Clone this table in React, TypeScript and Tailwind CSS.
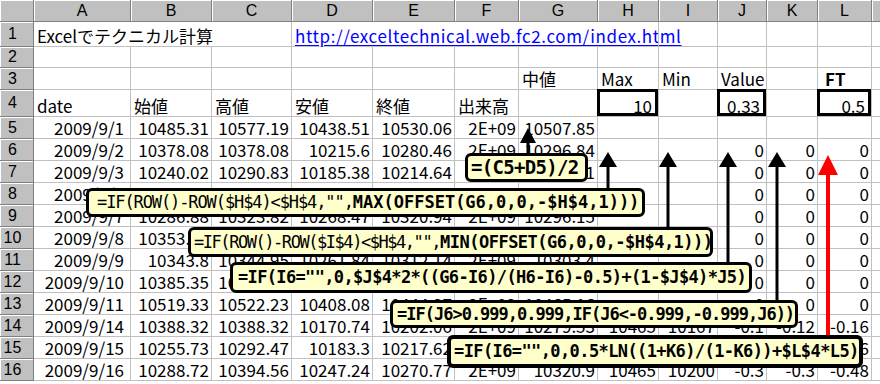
import React from 'react';

type Cell = { v?: string; r?: boolean; b?: boolean; box?: boolean; noR?: boolean; link?: boolean; pad?: string };

const W = [
  'w-[97px]', 'w-[81px]', 'w-[80px]', 'w-[81px]', 'w-[82px]', 'w-[64px]', 'w-[79px]',
  'w-[61px]', 'w-[59px]', 'w-[49px]', 'w-[51px]', 'w-[54px]', 'w-[40px]',
];
// last column only shows its left sliver, so no letter
const LETTERS = ['A', 'B', 'C', 'D', 'E', 'F', 'G', 'H', 'I', 'J', 'K', 'L', ''];

const n = (v: string): Cell => ({ v, r: true });
const e: Cell = {};

// one line of data: date, open, high, low, close, volume, mid, max, min, value, fisher...
const data = (vals: string[]): Cell[] => {
  const cells = vals.map((v, i) => (i === 0 ? { v, r: true, pad: 'pr-[6px]' } : n(v)));
  while (cells.length < 13) cells.push(e);
  return cells;
};

const ROWS: { num: number; h: string; cells: Cell[] }[] = [
  {
    num: 1,
    h: 'h-[25px]',
    cells: [
      { v: 'Excelでテクニカル計算', noR: true },
      { noR: true },
      {},
      { v: 'http://exceltechnical.web.fc2.com/index.html', link: true, noR: true },
      { noR: true },
      { noR: true },
      { noR: true },
      {}, {}, {}, {}, {}, {},
    ],
  },
  { num: 2, h: 'h-[21px]', cells: Array(13).fill(e) },
  {
    num: 3,
    h: 'h-[22px]',
    cells: [e, e, e, e, e, e, { v: '中値' }, { v: 'Max' }, { v: 'Min' }, { v: 'Value' }, e, { v: 'FT', b: true, pad: 'pl-[7px]' }, e],
  },
  {
    num: 4,
    h: 'h-[27px]',
    cells: [
      { v: 'date' }, { v: '始値' }, { v: '高値' }, { v: '安値' }, { v: '終値' }, { v: '出来高' }, e,
      { v: '10', r: true, box: true }, e, { v: '0.33', r: true, box: true }, e, { v: '0.5', r: true, box: true }, e,
    ],
  },
  { num: 5, h: 'h-[22px]', cells: data(['2009/9/1', '10485.31', '10577.19', '10438.51', '10530.06', '2E+09', '10507.85']) },
  { num: 6, h: 'h-[22px]', cells: data(['2009/9/2', '10378.08', '10378.08', '10215.6', '10280.46', '2E+09', '10296.84', '', '', '0', '0', '0']) },
  { num: 7, h: 'h-[22px]', cells: data(['2009/9/3', '10240.02', '10290.83', '10185.38', '10214.64', '2E+09', '10238.11', '', '', '0', '0', '0']) },
  { num: 8, h: 'h-[22px]', cells: data(['2009/9/4', '10175.54', '10201.02', '10132.43', '10187.11', '2E+09', '10166.73', '', '', '0', '0', '0']) },
  { num: 9, h: 'h-[22px]', cells: data(['2009/9/7', '10286.88', '10323.82', '10268.47', '10320.94', '2E+09', '10296.15', '', '', '0', '0', '0']) },
  { num: 10, h: 'h-[22px]', cells: data(['2009/9/8', '10353.08', '10402.44', '10313.78', '10393.23', '2E+09', '10358.11', '', '', '0', '0', '0']) },
  { num: 11, h: 'h-[22px]', cells: data(['2009/9/9', '10343.8', '10344.95', '10261.84', '10312.14', '2E+09', '10303.4', '', '', '0', '0', '0']) },
  { num: 12, h: 'h-[22px]', cells: data(['2009/9/10', '10385.35', '10475.18', '10360.43', '10444.33', '2E+09', '10417.81', '', '', '0', '0', '0']) },
  { num: 13, h: 'h-[22px]', cells: data(['2009/9/11', '10519.33', '10522.23', '10408.08', '10444.37', '2E+09', '10465.16', '', '', '0', '0', '0']) },
  { num: 14, h: 'h-[22px]', cells: data(['2009/9/14', '10388.32', '10388.32', '10170.74', '10202.06', '2E+09', '10279.53', '10465', '10167', '-0.1', '-0.12', '-0.16']) },
  { num: 15, h: 'h-[22px]', cells: data(['2009/9/15', '10255.73', '10292.47', '10183.3', '10217.62', '2E+09', '10237.89', '10465', '10167', '-0.3', '-0.3', '-0.46']) },
  { num: 16, h: 'h-[22px]', cells: data(['2009/9/16', '10288.72', '10394.56', '10247.24', '10270.77', '2E+09', '10320.9', '10465', '10200', '-0.3', '-0.3', '-0.48']) },
];

const hdr = 'bg-[#c0c0c0] border-r border-b border-r-[#808080] border-b-[#808080] shadow-[inset_1px_1px_0_#ffffff] shrink-0';

function SheetCell({ c, w }: { c: Cell; w: string }) {
  const cls = [
    'relative shrink-0 h-full flex items-end pb-[1px] whitespace-nowrap leading-[18px] border-b border-[#c0c0c0]',
    w,
    c.noR ? '' : 'border-r',
    c.r ? 'justify-end' : 'justify-start',
    c.pad ? c.pad : c.box ? 'pr-[6px]' : c.r ? 'pr-[2px]' : 'pl-[3px]',
    c.b ? 'font-bold' : '',
  ].join(' ');
  return (
    <div className={cls}>
      {c.link ? <span className="text-[#0000ff] underline underline-offset-2 tracking-[0.6px]">{c.v}</span> : c.v}
      {c.box && <div className="absolute left-[-1px] top-[-1px] right-0 bottom-0 border-[3px] border-black" />}
    </div>
  );
}

function Arrows() {
  const black = [
    { x: 608, top: 152, end: 189 },
    { x: 668, top: 152, end: 228 },
    { x: 728, top: 152, end: 263 },
    { x: 777, top: 152, end: 301 },
  ];
  return (
    <svg className="absolute left-0 top-0 pointer-events-none" width="880" height="384" viewBox="0 0 880 384">
      <line x1="528" y1="142" x2="528" y2="155" stroke="#000" strokeWidth="3" />
      <polygon points="520,143 528,128 536,143" fill="#000" />
      {black.map((a) => (
        <g key={a.x}>
          <line x1={a.x} y1={a.top + 14} x2={a.x} y2={a.end} stroke="#000" strokeWidth="3" />
          <polygon points={`${a.x - 9},${a.top + 15} ${a.x},${a.top} ${a.x + 9},${a.top + 15}`} fill="#000" />
        </g>
      ))}
      <line x1="828" y1="173" x2="828" y2="337" stroke="#ff0000" strokeWidth="4" />
      <polygon points="818,175 828,155 838,175" fill="#ff0000" />
    </svg>
  );
}

const bubble =
  "absolute flex items-center whitespace-nowrap rounded-[6px] border-[3px] border-black bg-[#ffffcc] font-['DejaVu_Sans_Mono',monospace] text-[17px] leading-none text-black";

export default function App() {
  return (
    <div className="relative w-[880px] h-[384px] overflow-hidden bg-white text-black text-[17px] font-['Noto_Sans_CJK_JP',sans-serif]">
      {/* column letters */}
      <div className="flex h-[22px] font-['Liberation_Sans',sans-serif] text-[16px]">
        <div className={`${hdr} w-[34px] h-full`} />
        {LETTERS.map((l, i) => (
          <div key={i} className={`${hdr} ${W[i]} h-full flex items-center justify-center leading-[18px]`}>
            {l}
          </div>
        ))}
      </div>

      {ROWS.map((row) => (
        <div key={row.num} className={`flex ${row.h}`}>
          <div className={`${hdr} w-[34px] h-full flex items-center justify-center pr-[8px] leading-[18px] font-['Liberation_Sans',sans-serif] text-[16px]`}>
            {row.num}
          </div>
          {row.cells.map((c, i) => (
            <SheetCell key={i} c={c} w={W[i]} />
          ))}
        </div>
      ))}

      <Arrows />

      {/* formula callouts */}
      <div className={`${bubble} left-[465px] top-[153px] w-[123px] h-[29px] pl-[3px] text-[19px] font-bold tracking-[-0.7px]`}>=(C5+D5)/2</div>

      <div className={`${bubble} left-[86px] top-[188px] w-[559px] h-[29px] pl-[8px]`}>
        <span className="tracking-[-1.1px]">=IF(ROW()-ROW($H$4)&lt;$H$4,"",</span>
        <span className="font-bold tracking-[0px]">MAX(OFFSET(G6,0,0,-$H$4,1)))</span>
      </div>

      <div className={`${bubble} left-[188px] top-[227px] w-[525px] h-[30px] pl-[3px]`}>
        <span className="tracking-[-1.45px]">=IF(ROW()-ROW($I$4)&lt;$H$4,"",</span>
        <span className="font-bold tracking-[-0.5px]">MIN(OFFSET(G6,0,0,-$H$4,1)))</span>
      </div>

      <div className={`${bubble} left-[230px] top-[262px] w-[522px] h-[31px] pl-[5px] font-bold tracking-[-0.65px]`}>
        =IF(I6="",0,$J$4*2*((G6-I6)/(H6-I6)-0.5)+(1-$J$4)*J5)
      </div>

      <div className={`${bubble} left-[390px] top-[300px] w-[408px] h-[28px] pl-[4px] font-bold tracking-[-1px]`}>
        =IF(J6&gt;0.999,0.999,IF(J6&lt;-0.999,-0.999,J6))
      </div>

      <div className={`${bubble} left-[447px] top-[335px] w-[416px] h-[33px] pl-[3px] border-[4px] border-[#ff0000] text-[#ff0000] font-bold tracking-[-0.6px]`}>
        =IF(I6="",0,0.5*LN((1+K6)/(1-K6))+$L$4*L5)
      </div>
    </div>
  );
}
